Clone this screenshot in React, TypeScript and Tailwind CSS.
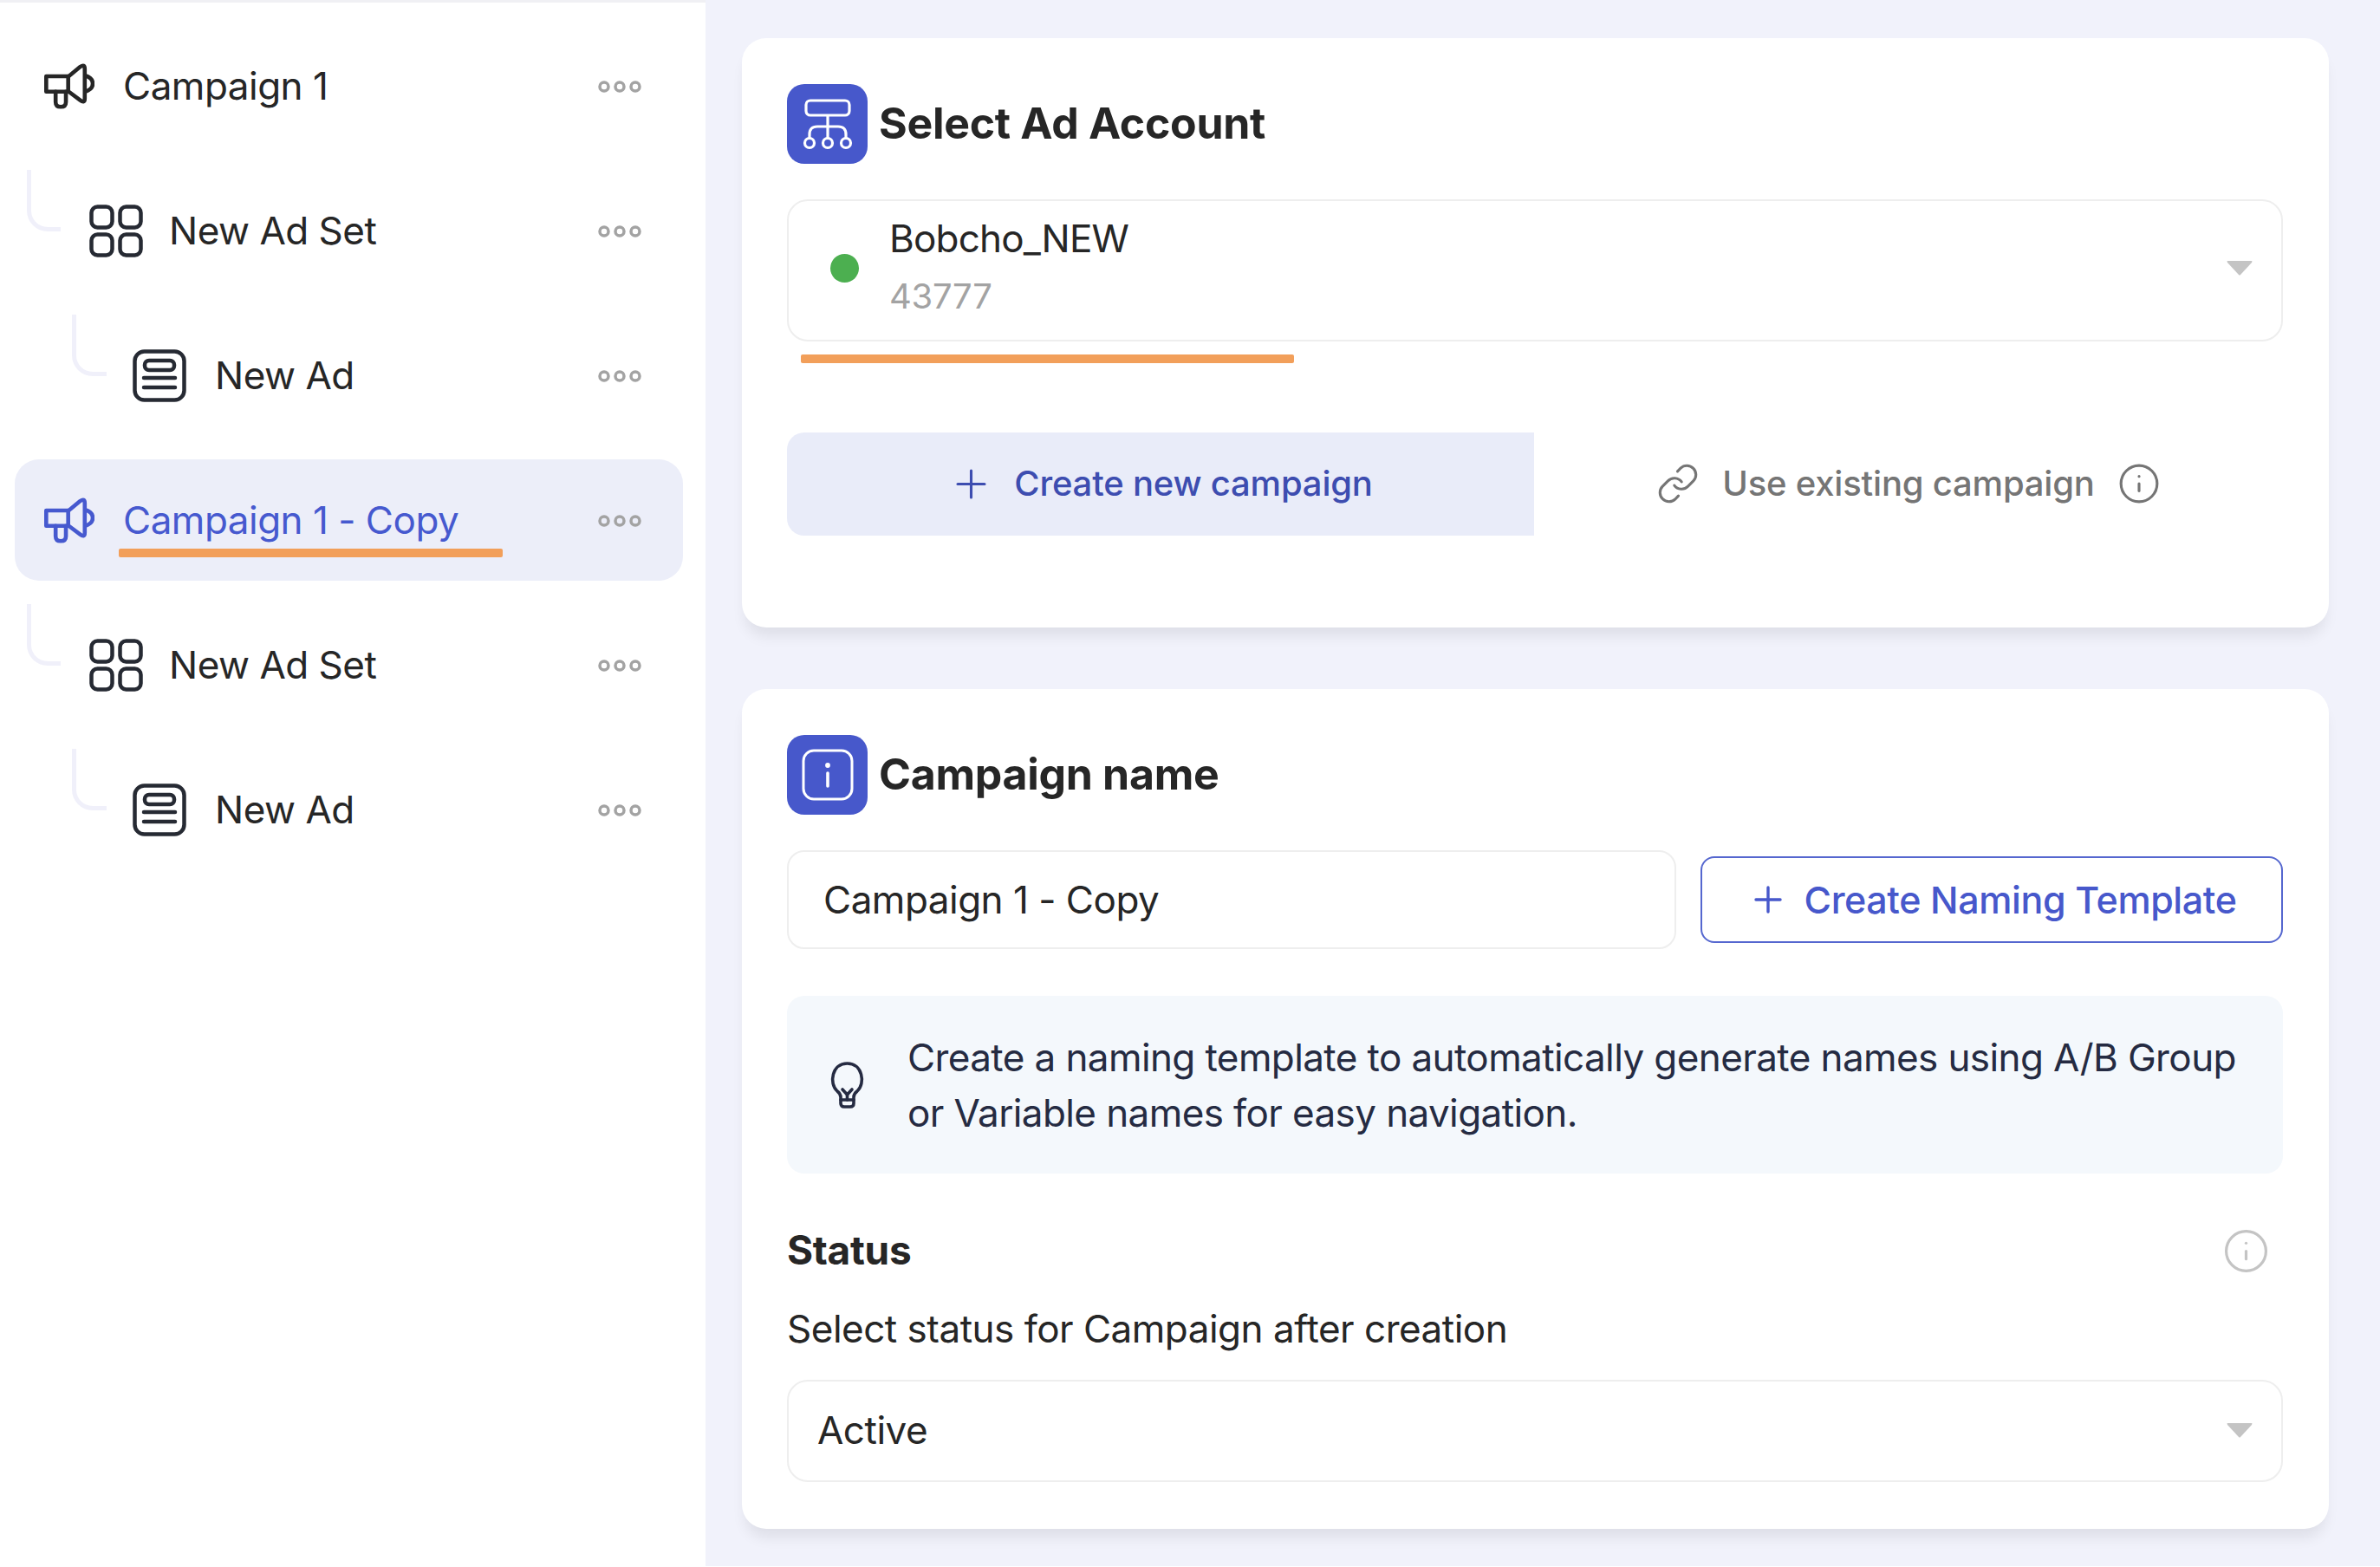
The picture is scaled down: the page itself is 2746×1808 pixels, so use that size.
import { Info, Link, Plus } from "lucide-react";

type RowProps = {
  label: string;
  level: 0 | 1 | 2;
  active?: boolean;
};

function Megaphone({ className }: { className: string }) {
  return (
    <svg viewBox="0 0 176 158" fill="none" stroke="currentColor" strokeWidth="14" strokeLinejoin="round" strokeLinecap="round" className={className}>
      <path d="M7 44 H86 L126 11 Q142 0 142 18 V122 Q142 140 126 128 L86 98 H7 Z" />
      <path d="M84 44 V98" />
      <path d="M40 98 V134 Q40 151 58 151 Q76 151 76 134 V98" />
      <path d="M144 42 Q170 50 170 70 Q170 90 144 98" />
    </svg>
  );
}

function GridIcon() {
  return (
    <svg viewBox="0 0 62 61" fill="none" stroke="#262a33" strokeWidth="4.5" className="w-[62px] h-[61px] shrink-0">
      <rect x="2.5" y="2.5" width="24" height="24" rx="7" />
      <rect x="35.5" y="2.5" width="24" height="24" rx="7" />
      <rect x="2.5" y="34.5" width="24" height="24" rx="7" />
      <rect x="35.5" y="34.5" width="24" height="24" rx="7" />
    </svg>
  );
}

function AdIcon() {
  return (
    <svg viewBox="0 0 62 61" fill="none" stroke="#262a33" strokeWidth="4.5" strokeLinecap="round" className="w-[62px] h-[61px] shrink-0">
      <rect x="2.5" y="2.5" width="57" height="56" rx="11" />
      <rect x="14" y="13" width="34" height="11" rx="5" />
      <path d="M13 33 H49" />
      <path d="M13 44 H49" />
    </svg>
  );
}

function Dots() {
  return (
    <svg viewBox="0 0 50 14" fill="none" stroke="#a3a3a3" strokeWidth="3.5" className="w-[50px] h-[14px] shrink-0">
      <circle cx="7" cy="7" r="5" />
      <circle cx="25" cy="7" r="5" />
      <circle cx="43" cy="7" r="5" />
    </svg>
  );
}

function Arrow() {
  return (
    <svg viewBox="0 0 30 18" className="w-[30px] h-[18px] shrink-0">
      <path d="M1 1 H29 Q30 1 29 3 L16 17 Q15 18 14 17 L1 3 Q0 1 1 1 Z" fill="#c4c4c4" />
    </svg>
  );
}

function SidebarRow({ label, level, active }: RowProps) {
  return (
    <div
      className={
        active
          ? "relative flex items-center h-[140px] rounded-[28px] bg-[#eceef9] pl-[34px] pr-[48px] text-[#4659cf]"
          : level === 0
            ? "relative flex items-center h-[140px] pl-[34px] pr-[48px] text-[#262626]"
            : level === 1
              ? "relative flex items-center h-[140px] pl-[86px] pr-[48px] text-[#262626]"
              : "relative flex items-center h-[140px] pl-[136px] pr-[48px] text-[#262626]"
      }
    >
      {level === 1 && (
        <div className="absolute left-[14px] top-0 w-[39px] h-[71px] border-l-[5px] border-b-[5px] border-[#f0f0fa] rounded-bl-[24px]" />
      )}
      {level === 2 && (
        <div className="absolute left-[66px] top-0 w-[40px] h-[71px] border-l-[5px] border-b-[5px] border-[#f0f0fa] rounded-bl-[24px]" />
      )}
      {level === 0 && <Megaphone className="w-[58px] h-[53px] shrink-0" />}
      {level === 1 && <GridIcon />}
      {level === 2 && <AdIcon />}
      <span className={level === 1 ? "ml-[30px]" : "ml-[33px]"}>{label}</span>
      <div className="ml-auto mt-[2px]">
        <Dots />
      </div>
      {active && (
        <div className="absolute left-[120px] top-[103px] w-[443px] h-[10px] rounded-[2px] bg-[#f29f5a]" />
      )}
    </div>
  );
}

function CardTitle({ title, children }: { title: string; children: React.ReactNode }) {
  return (
    <div className="flex items-center gap-[13px]">
      <div className="w-[93px] h-[92px] rounded-[20px] bg-[#4758cb] flex items-center justify-center">
        {children}
      </div>
      <h2 className="pb-[3px] text-[50px] leading-none font-bold tracking-[-0.3px] text-[#262626]">{title}</h2>
    </div>
  );
}

export default function App() {
  return (
    <div className="flex w-[2746px] h-[1808px] overflow-hidden bg-white text-[44px] tracking-[-0.5px] font-['Inter',sans-serif]">
      {/* sidebar */}
      <div className="w-[814px] shrink-0 bg-white border-t-[3px] border-[#f0f0f4] pt-[26px] pl-[17px] pr-[26px] flex flex-col gap-[27px]">
        <SidebarRow label="Campaign 1" level={0} />
        <SidebarRow label="New Ad Set" level={1} />
        <SidebarRow label="New Ad" level={2} />
        <SidebarRow label="Campaign 1 - Copy" level={0} active />
        <SidebarRow label="New Ad Set" level={1} />
        <SidebarRow label="New Ad" level={2} />
      </div>

      {/* main */}
      <div className="flex-1 mb-px bg-[#f1f2fb] pt-[44px] pl-[42px] pr-[59px] flex flex-col gap-[71px]">
        <div className="bg-white rounded-[28px] pt-[53px] pl-[52px] pr-[53px] pb-[106px] shadow-[0_14px_16px_-4px_rgba(0,0,0,0.08)]">
          <CardTitle title="Select Ad Account">
            <svg viewBox="0 0 93 92" fill="none" stroke="white" strokeWidth="3.2" className="w-[93px] h-[92px]">
              <rect x="22" y="19" width="50" height="17" rx="5" />
              <path d="M47 36 V62" />
              <path d="M26 62 V58 Q26 49 35 49 H59 Q68 49 68 58 V62" />
              <circle cx="26" cy="68" r="5.5" />
              <circle cx="47" cy="68" r="5.5" />
              <circle cx="68" cy="68" r="5.5" />
            </svg>
          </CardTitle>

          <div className="mt-[41px] h-[164px] rounded-[24px] border-2 border-[#eeeeee] flex items-center pl-[48px] pr-[33px] pb-[6px]">
            <div className="w-[33px] h-[33px] rounded-full bg-[#4caf50]" />
            <div className="ml-[35px] flex flex-col">
              <span className="leading-[66px] tracking-[-0.8px] text-[#262626]">Bobcho_NEW</span>
              <span className="leading-[68px] text-[40px] tracking-[-0.3px] text-[#a3a3a3]">43777</span>
            </div>
            <div className="ml-auto">
              <Arrow />
            </div>
          </div>

          <div className="mt-[15px] ml-[16px] w-[569px] h-[10px] rounded-[2px] bg-[#f29f5a]" />

          <div className="mt-[80px] flex h-[119px] text-[40px] tracking-[-0.2px]">
            <div className="w-[862px] rounded-l-[20px] bg-[#e9ecf9] flex items-center justify-center gap-[23px] pb-px text-[#3d4db0] font-medium">
              <Plus className="w-[53px] h-[53px]" strokeWidth={1.4} />
              <span>Create new campaign</span>
            </div>
            <div className="flex-1 flex items-center justify-center gap-[26px] pb-px text-[#757575] font-medium">
              <Link className="w-[50px] h-[50px]" strokeWidth={1.5} />
              <span>Use existing campaign</span>
              <Info className="w-[50px] h-[50px]" strokeWidth={1.5} />
            </div>
          </div>
        </div>

        <div className="bg-white rounded-[28px] pt-[53px] pl-[52px] pr-[53px] pb-[54px] shadow-[0_14px_16px_-4px_rgba(0,0,0,0.08)]">
          <CardTitle title="Campaign name">
            <svg viewBox="0 0 93 92" fill="none" stroke="white" strokeWidth="3" strokeLinecap="round" className="w-[93px] h-[92px]">
              <rect x="19" y="18" width="56" height="56" rx="12" />
              <path d="M47 44 V59" strokeWidth="3.6" />
              <circle cx="47" cy="35" r="1.4" fill="white" />
            </svg>
          </CardTitle>

          <div className="mt-[41px] flex items-center gap-[28px]">
            <div className="flex-1 h-[114px] rounded-[20px] border-2 border-[#eeeeee] flex items-center pl-[40px] text-[#262626]">
              Campaign 1 - Copy
            </div>
            <div className="w-[672px] h-[100px] rounded-[16px] border-2 border-[#5567cf] flex items-center justify-center gap-[18px] text-[43px] tracking-[-0.4px] font-medium text-[#4758cb]">
              <Plus className="w-[48px] h-[48px]" strokeWidth={1.7} />
              <span>Create Naming Template</span>
            </div>
          </div>

          <div className="mt-[54px] h-[205px] rounded-[20px] bg-[#f4f8fc] flex items-center pl-[49px] pr-[40px] text-[#252b42]">
            <svg viewBox="0 0 41 54" fill="none" stroke="#252b42" strokeWidth="3.6" strokeLinecap="round" strokeLinejoin="round" className="w-[41px] h-[54px] shrink-0">
              <path d="M13 44 V41 Q13 37 9 34 C-1 25 3 2 20.5 2 C38 2 42 25 32 34 Q28 37 28 41 V44" />
              <path d="M15 32 L20.5 38 L26 32" />
              <path d="M20.5 38 V44" />
              <path d="M13 44 H28 V48 Q28 52 24 52 H17 Q13 52 13 48 Z" />
            </svg>
            <p className="ml-[49px] leading-[64px] tracking-[-0.6px] whitespace-nowrap">
              Create a naming template to automatically generate names using A/B Group
              <br />
              or Variable names for easy navigation.
            </p>
          </div>

          <div className="mt-[64px] h-[48px] flex items-center justify-between">
            <h3 className="text-[46px] font-bold tracking-[-0.3px] text-[#262626]">Status</h3>
            <Info className="mr-[15px] mt-[3px] w-[55px] h-[55px] text-[#c4c4c4]" strokeWidth={1.4} />
          </div>

          <p className="mt-[39px] leading-[56px] text-[#262626]">Select status for Campaign after creation</p>

          <div className="mt-[31px] h-[118px] rounded-[24px] border-2 border-[#eeeeee] flex items-center pl-[33px] pr-[33px] pb-[3px] text-[#262626]">
            <span>Active</span>
            <div className="ml-auto">
              <Arrow />
            </div>
          </div>
        </div>
      </div>
    </div>
  );
}
